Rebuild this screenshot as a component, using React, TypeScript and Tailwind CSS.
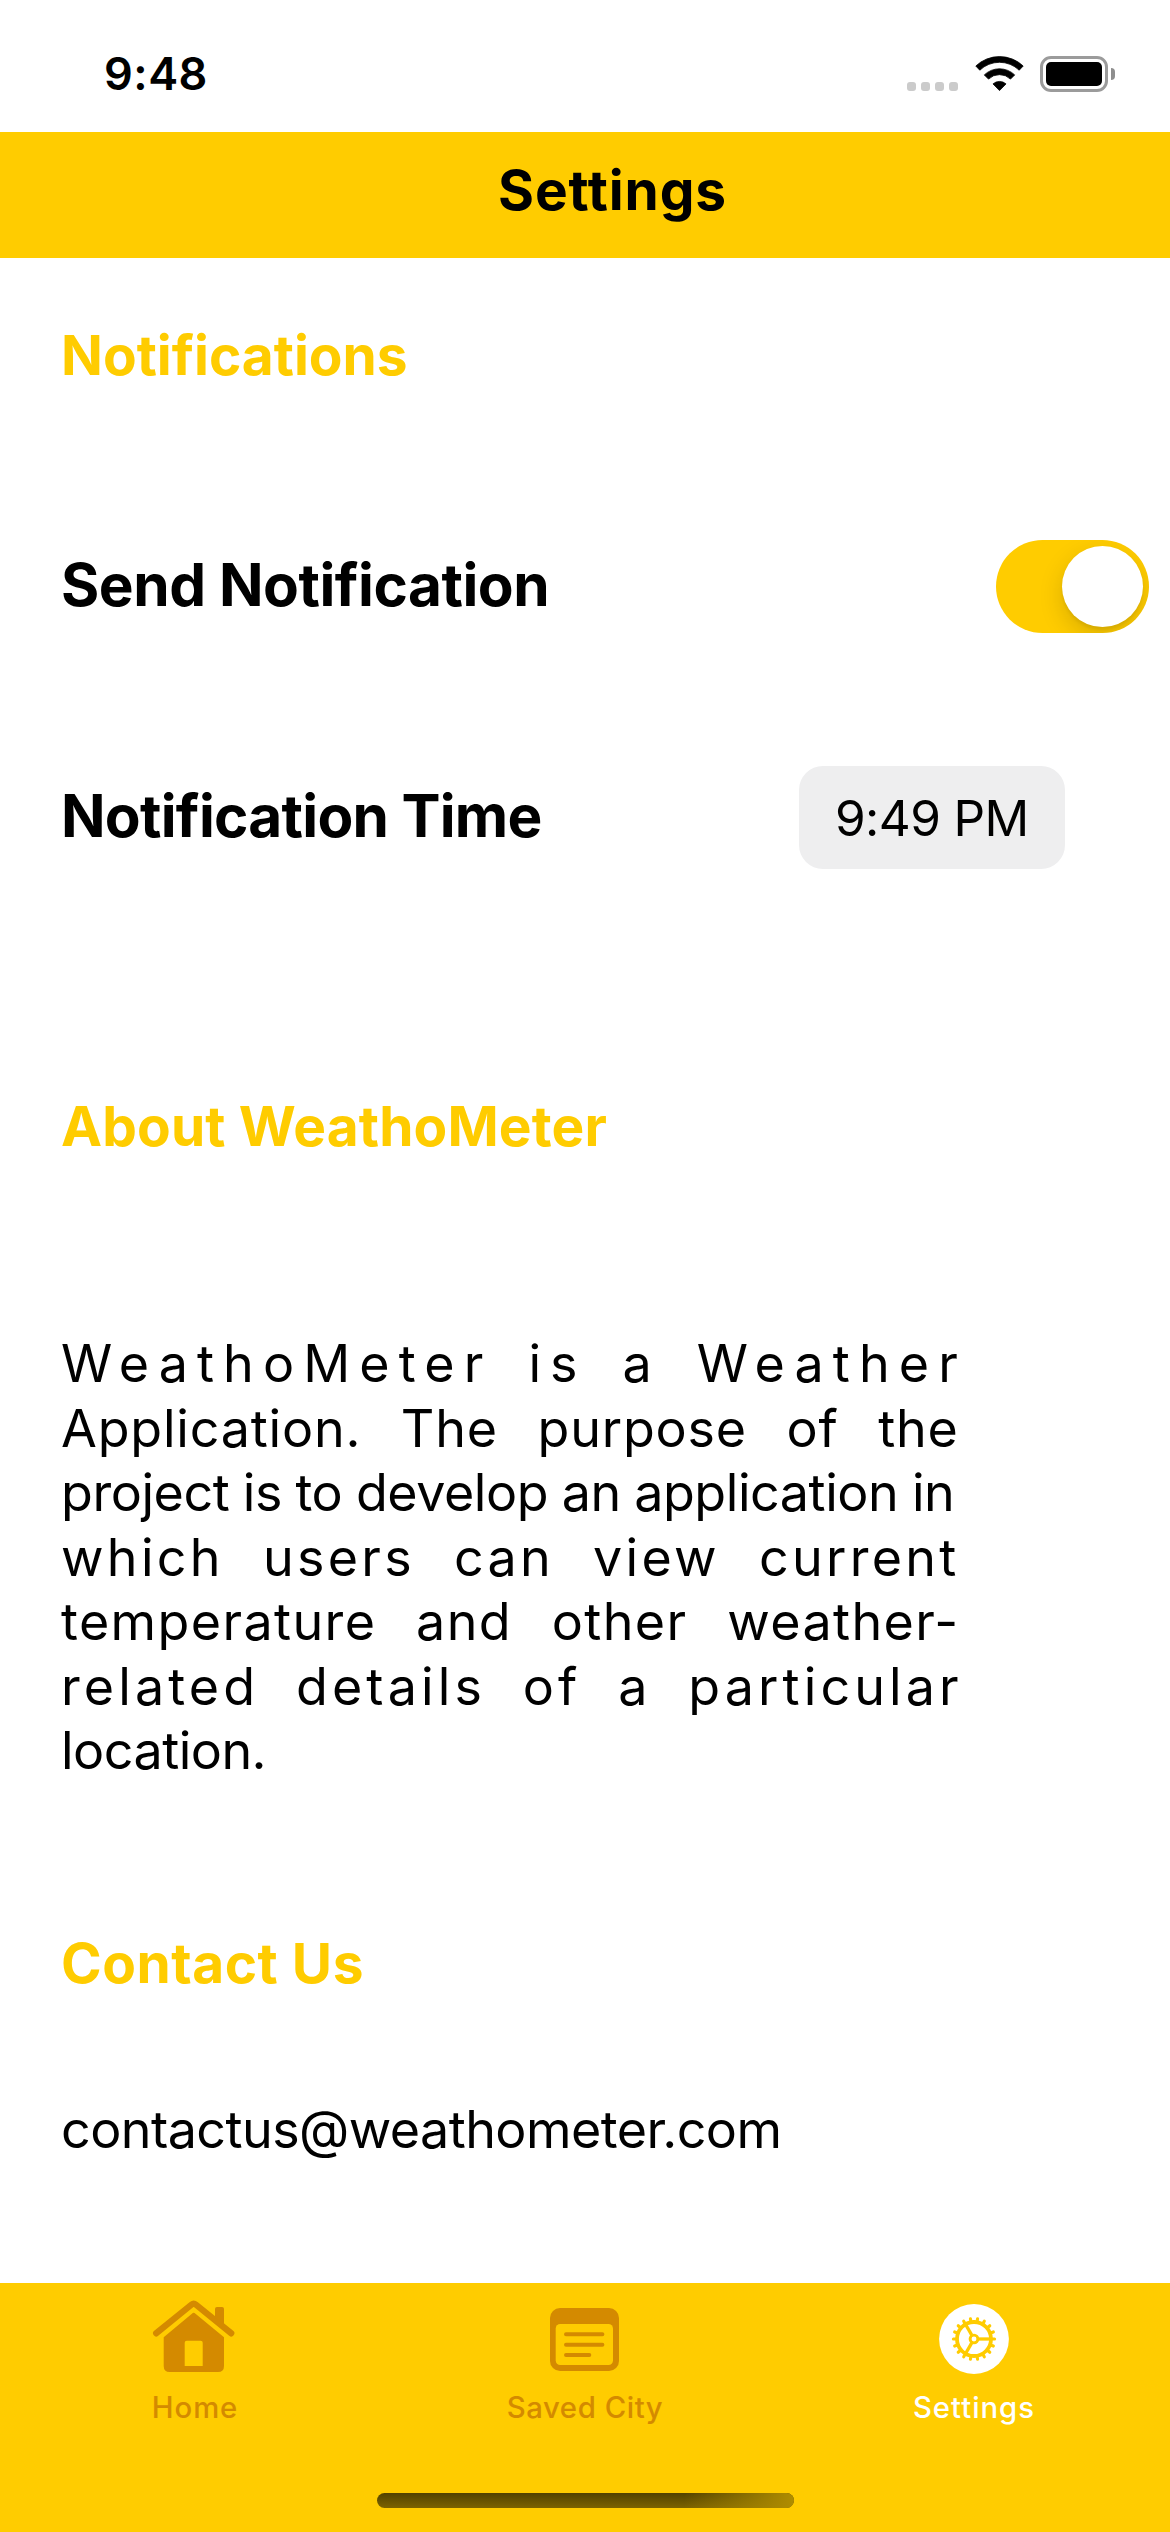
import React from "react";

function StatusBar() {
  return (
    <div className="flex h-[132px] items-start pl-[104px] pr-[55px]">
      <span className="mt-[44px] text-[45px] leading-[60px] font-semibold tracking-[0.5px]">9:48</span>
      <div className="ml-auto flex items-start">
        <div className="mt-[82px] flex gap-[5px]">
          {[0, 1, 2, 3].map((i) => (
            <span key={i} className="size-[9px] rounded-[3px] bg-[#cbcbcb]" />
          ))}
        </div>
        <svg className="mt-[55px] ml-[17px] h-[36px] w-[49px]" viewBox="0 0 49 36" stroke="#000" strokeWidth="0.8" strokeLinejoin="round">
          <path d="M0.8 11A34.5 34.5 0 0 1 48.2 11L44.2 15.2A28.5 28.5 0 0 0 4.8 15.2Z" />
          <path d="M9.3 19.9A22 22 0 0 1 39.7 19.9L35.5 24.1A15.8 15.8 0 0 0 13.5 24.1Z" />
          <path d="M18 28.9A9.8 9.8 0 0 1 31 28.9L24.5 35.6Z" />
        </svg>
        <div className="mt-[56px] ml-[16px] flex h-[36px] w-[68px] rounded-[11px] border-[3px] border-[#9b9b9b] p-[3px]">
          <span className="flex-1 rounded-[5px] bg-black" />
        </div>
        <span className="mt-[68px] ml-[3px] h-[12px] w-[4px] rounded-r-full bg-[#8e8e8e]" />
      </div>
    </div>
  );
}

function SectionTitle({ children }: { children: React.ReactNode }) {
  return <h2 className="text-[55px] leading-[64px] font-bold text-[#ffcc00]">{children}</h2>;
}

const aboutLines = [
  { text: "WeathoMeter is a Weather", spacing: "tracking-[9.11px] [word-spacing:12.2px]" },
  { text: "Application. The purpose of the", spacing: "tracking-[0.8px] [word-spacing:24.2px]" },
  { text: "project is to develop an application in", spacing: "tracking-[-0.44px] [word-spacing:-0.64px]" },
  { text: "which users can view current", spacing: "tracking-[3.3px] [word-spacing:21.1px]" },
  { text: "temperature and other weather-", spacing: "tracking-[1.39px] [word-spacing:23.7px]" },
  { text: "related details of a particular", spacing: "tracking-[4.1px] [word-spacing:18.1px]" },
  { text: "location.", spacing: "tracking-[-0.51px]" },
];

function HomeIcon() {
  return (
    <svg className="size-[90px]" viewBox="0 0 90 90" fill="#d48a00">
      <path d="M6.2 43.3L41.5 14.6Q43.7 12.8 45.9 14.6L81.2 43.3" fill="none" stroke="#d48a00" strokeWidth="6.3" strokeLinecap="round" />
      <path d="M65 26.5V19Q65 17 67 17H72Q74 17 74 19V34.5L65 27.5Z" />
      <path
        fillRule="evenodd"
        d="M41.9 23.7Q43.7 22 45.5 23.7L74 47.2V76Q74 82 68 82H19.7Q13.7 82 13.7 76V47.2ZM36.7 50.7Q34.7 50.7 34.7 52.7V76H52.7V52.7Q52.7 50.7 50.7 50.7Z"
      />
    </svg>
  );
}

function SavedIcon() {
  return (
    <svg className="size-[90px]" viewBox="0 0 90 90">
      <rect x="10" y="18" width="69" height="63" rx="10" fill="#d48a00" />
      <rect x="15.7" y="34" width="57.3" height="41" rx="4.5" fill="#ffcc00" />
      <path d="M26 44.3H62.4M26 54.7H62.4M26 65H49.3" stroke="#d48a00" strokeWidth="4" strokeLinecap="round" />
    </svg>
  );
}

function SettingsIcon() {
  return (
    <svg className="size-[90px]" viewBox="0 0 90 90">
      <circle cx="45" cy="49" r="34.9" fill="#fff" />
      <g transform="translate(45 49)" stroke="#ffcc00" fill="none">
        <circle r="17" strokeWidth="3.8" />
        {Array.from({ length: 18 }, (_, i) => (
          <path key={i} d="M17.5 0H20.6" strokeWidth="3.1" strokeLinecap="round" transform={`rotate(${i * 20})`} />
        ))}
        {[0, 120, 240].map((a) => (
          <path key={a} d="M4.5 0H17" strokeWidth="3.3" transform={`rotate(${a})`} />
        ))}
        <circle r="3.9" strokeWidth="2.9" />
      </g>
    </svg>
  );
}

export default function App() {
  return (
    <div className="flex h-[2532px] w-[1170px] flex-col overflow-hidden bg-white font-[Inter,sans-serif] text-black">
      <StatusBar />
      <header className="flex h-[126px] items-center bg-[#ffcc00] pb-[10px] pl-[498px]">
        <h1 className="text-[55px] leading-[64px] font-bold tracking-[0.9px]">Settings</h1>
      </header>

      <main className="flex flex-1 flex-col pt-[65px] pl-[61px]">
        <SectionTitle>Notifications</SectionTitle>

        <div className="mt-[153px] flex h-[93px] items-center justify-between pr-[21px]">
          <span className="pb-[4px] text-[58.5px] leading-[64px] font-bold tracking-[-0.47px]">Send Notification</span>
          <button role="switch" aria-checked="true" className="flex h-[93px] w-[153px] items-center justify-end overflow-hidden rounded-full bg-[#ffcc00] pr-[6px]">
            <span className="size-[81px] rounded-full bg-white shadow-[0_9px_24px_rgba(0,0,0,0.15),0_3px_3px_rgba(0,0,0,0.06)]" />
          </button>
        </div>

        <div className="mt-[133px] flex h-[103px] items-center justify-between pr-[105px]">
          <span className="pb-[4px] text-[58.5px] leading-[64px] font-bold tracking-[-0.72px]">Notification Time</span>
          <button className="flex h-[103px] w-[266px] items-center rounded-[24px] bg-[#eeeeef] pl-[36px] text-[49.5px] leading-[64px] tracking-[-0.6px] whitespace-nowrap">
            9:49 PM
          </button>
        </div>

        <div className="mt-[225px]">
          <SectionTitle>
            <span className="tracking-[0.15px]">About WeathoMeter</span>
          </SectionTitle>
        </div>
        <p className="mt-[174px] text-[52px] leading-[64.5px]">
          {aboutLines.map((line) => (
            <span key={line.text} className={`block whitespace-nowrap ${line.spacing}`}>
              {line.text}
            </span>
          ))}
        </p>

        <div className="mt-[147px]">
          <SectionTitle>
            <span className="tracking-[0.54px]">Contact Us</span>
          </SectionTitle>
        </div>
        <p className="mt-[103px] text-[52px] leading-[64px] tracking-[-0.55px]">contactus@weathometer.com</p>
      </main>

      <footer className="flex h-[249px] flex-col items-center bg-[#ffcc00] pt-[7px]">
        <nav className="flex w-full text-[29.3px] leading-[36px] font-medium text-[#d48a00]">
          <a className="flex w-[390px] flex-col items-center gap-[10px]">
            <HomeIcon />
            <span className="tracking-[0.92px]">Home</span>
          </a>
          <a className="flex w-[390px] flex-col items-center gap-[10px]">
            <SavedIcon />
            <span className="tracking-[0.56px]">Saved City</span>
          </a>
          <a className="flex w-[388px] flex-col items-center gap-[10px] text-white">
            <SettingsIcon />
            <span className="tracking-[0.98px]">Settings</span>
          </a>
        </nav>
        <div className="mt-[67px] h-[15px] w-[417px] rounded-full bg-linear-to-b from-[#524200] to-[#7c6300]">
          <div className="ml-auto h-full w-[110px] rounded-r-full bg-linear-to-r from-[#b08d00]/0 to-[#b08d00]" />
        </div>
      </footer>
    </div>
  );
}
